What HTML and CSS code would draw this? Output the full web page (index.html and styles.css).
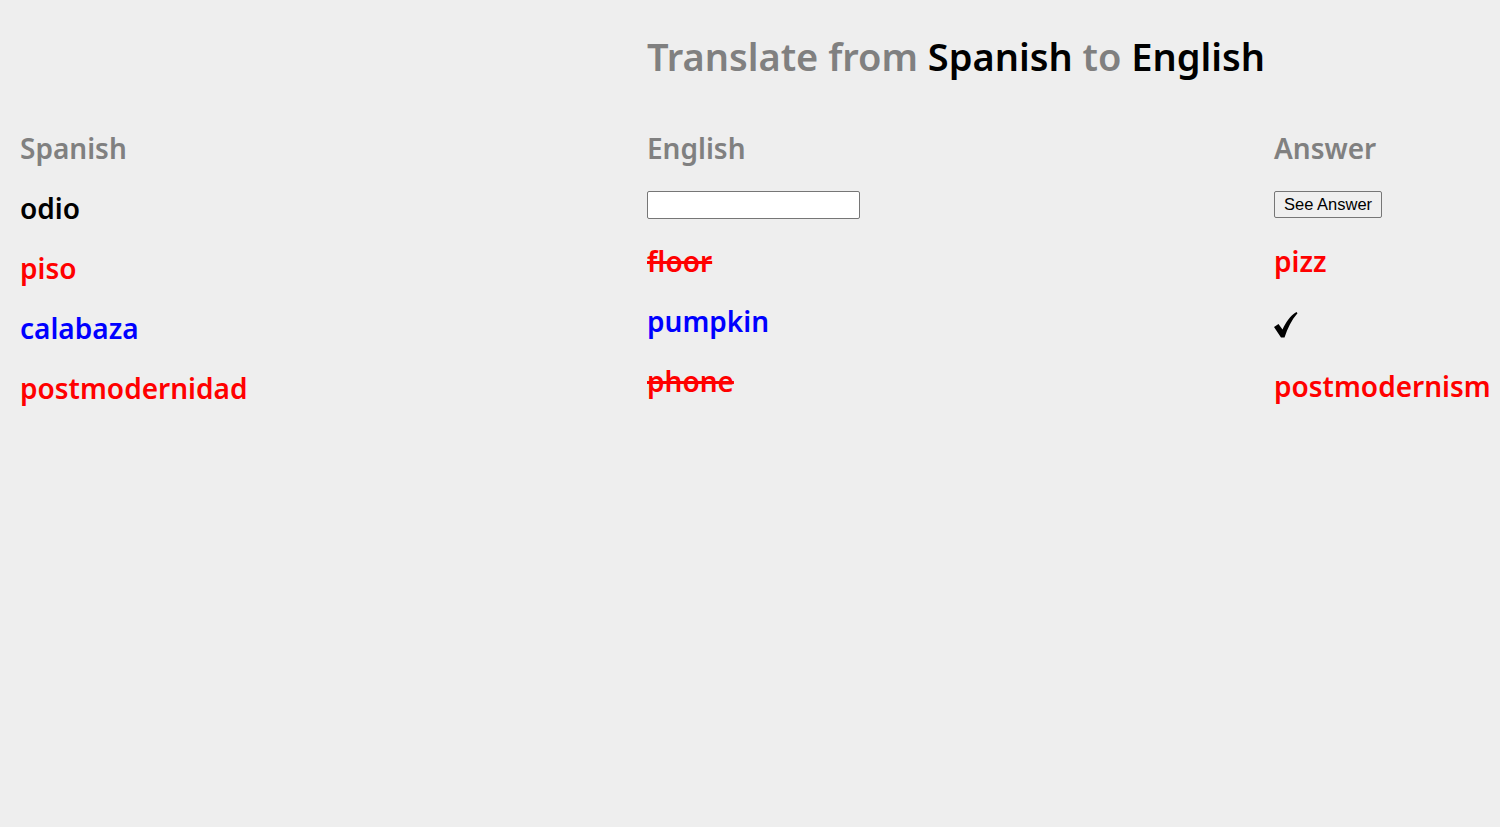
FILE: index.html
```html
<!DOCTYPE html>
<html>
<head>
<meta charset="utf-8">
<link rel="stylesheet" href="styles.css">
</head>
<body>
<div class="page">
  <h1 class="title"><span class="muted">Translate from</span> Spanish <span class="muted">to</span> English</h1>
  <div class="grid">
    <div class="col">
      <div class="head">Spanish</div>
      <div class="cell black">odio</div>
      <div class="cell red">piso</div>
      <div class="cell blue">calabaza</div>
      <div class="cell red">postmodernidad</div>
    </div>
    <div class="col">
      <div class="head">English</div>
      <div class="cell ctl"><input class="field" type="text"></div>
      <div class="cell red strike">floor</div>
      <div class="cell blue">pumpkin</div>
      <div class="cell red strike">phone</div>
    </div>
    <div class="col">
      <div class="head">Answer</div>
      <div class="cell ctl"><button class="btn">See Answer</button></div>
      <div class="cell red">pizz</div>
      <div class="cell check"><svg class="tick" width="24" height="26" viewBox="0 0 24 26"><path d="M0 15 L4.5 12 L8.5 17.5 C12 10 16 4 22.5 0 L23.5 1.2 C17.5 8 13.5 16 10.5 25.5 L7 25.5 Z" fill="#000"/></svg></div>
      <div class="cell red">postmodernism</div>
    </div>
  </div>
</div>
</body>
</html>
```
FILE: styles.css
```css
html, body {
  margin: 0;
  padding: 0;
  background: #eeeeee;
}
body {
  font-family: "Noto Sans", "DejaVu Sans", sans-serif;
  color: #000;
}
.page {
  padding: 0 0 0 20px;
}
.title {
  margin: 0;
  padding: 29px 0 0 627px;
  font-size: 38px;
  font-weight: 600;
  line-height: 54px;
  color: #000;
}
.muted { color: #808080; }
.grid {
  display: grid;
  grid-template-columns: 627px 627px auto;
  margin-top: 35px;
}
.col {
  display: flex;
  flex-direction: column;
}
.head {
  height: 60px;
  display: flex;
  align-items: center;
  font-size: 28px;
  font-weight: 600;
  color: #808080;
}
.cell {
  height: 60px;
  display: flex;
  align-items: center;
  font-size: 28px;
  font-weight: 600;
}
.cell.ctl { height: 53px; }
.cell.check { height: 65px; }
.tick { display: block; margin-top: 2px; }
.black { color: #000; }
.red { color: #ff0000; }
.blue { color: #0000ff; }
.strike { text-decoration: line-through; text-decoration-thickness: 3px; }
.field {
  width: 213px;
  height: 28px;
  box-sizing: border-box;
  border: 1px solid #767676;
  border-radius: 2px;
  background: #fff;
  margin: 0;
}
.btn {
  font-family: "Liberation Sans", Arial, sans-serif;
  font-size: 16.5px;
  height: 27px;
  padding: 1px 9px;
  border: 1px solid #767676;
  border-radius: 2px;
  background: #efefef;
  color: #000;
  margin: 0;
}
```
